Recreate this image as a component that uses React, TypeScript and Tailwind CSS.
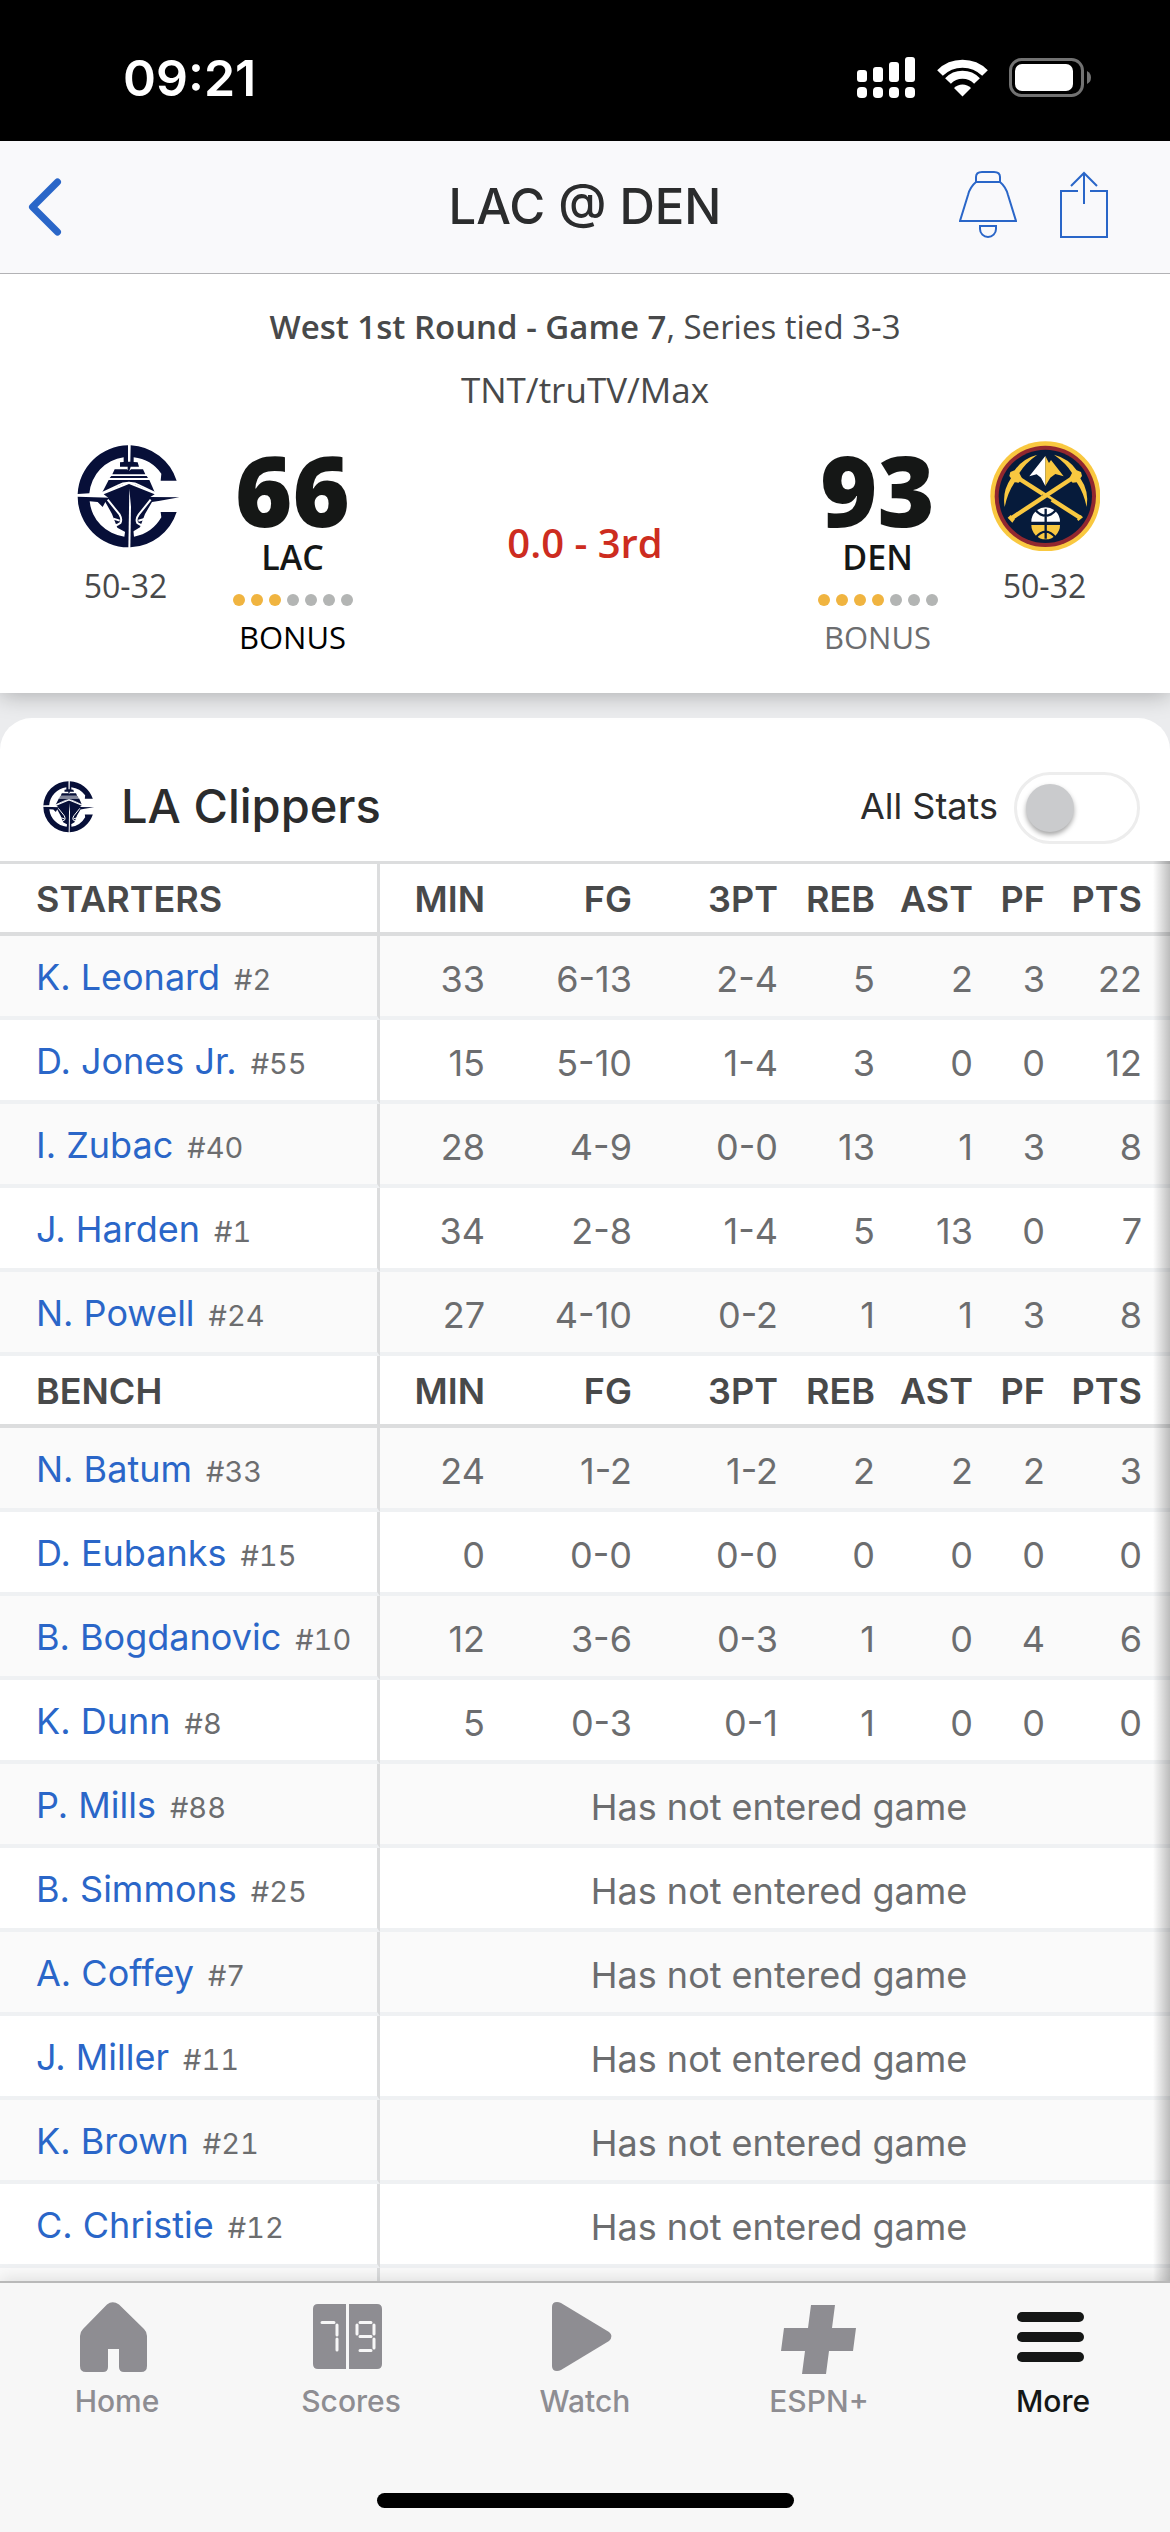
import { useState } from 'react';
import type { ReactNode } from 'react';

type StatLine = [string, string, string, string, string, string, string];

type Player = {
  name: string;
  number: number;
  stats?: StatLine;
};

type TeamScore = {
  abbr: string;
  score: number;
  record: string;
  fouls: number;
  inBonus: boolean;
  logo: ReactNode;
};

const COLUMNS = ['MIN', 'FG', '3PT', 'REB', 'AST', 'PF', 'PTS'];

const STARTERS: Player[] = [
  { name: 'K. Leonard', number: 2, stats: ['33', '6-13', '2-4', '5', '2', '3', '22'] },
  { name: 'D. Jones Jr.', number: 55, stats: ['15', '5-10', '1-4', '3', '0', '0', '12'] },
  { name: 'I. Zubac', number: 40, stats: ['28', '4-9', '0-0', '13', '1', '3', '8'] },
  { name: 'J. Harden', number: 1, stats: ['34', '2-8', '1-4', '5', '13', '0', '7'] },
  { name: 'N. Powell', number: 24, stats: ['27', '4-10', '0-2', '1', '1', '3', '8'] },
];

const BENCH: Player[] = [
  { name: 'N. Batum', number: 33, stats: ['24', '1-2', '1-2', '2', '2', '2', '3'] },
  { name: 'D. Eubanks', number: 15, stats: ['0', '0-0', '0-0', '0', '0', '0', '0'] },
  { name: 'B. Bogdanovic', number: 10, stats: ['12', '3-6', '0-3', '1', '0', '4', '6'] },
  { name: 'K. Dunn', number: 8, stats: ['5', '0-3', '0-1', '1', '0', '0', '0'] },
  { name: 'P. Mills', number: 88 },
  { name: 'B. Simmons', number: 25 },
  { name: 'A. Coffey', number: 7 },
  { name: 'J. Miller', number: 11 },
  { name: 'K. Brown', number: 21 },
  { name: 'C. Christie', number: 12 },
];

function ClippersLogo({ className }: { className: string }) {
  return (
    <svg viewBox="33 33 330 330" className={className} aria-hidden="true">
      <g fill="#070f38">
        <path d="M204 46A153 153 0 0 0 53 192L88 190A119 119 0 0 1 191 82L191 96L180 97V110H203V124L207 126L212 110H237L233 97L221 96V82A119 119 0 0 1 304 131L302 152H350A153 153 0 0 0 212 46L211 95H204Z" />
        <path d="M53 200L150 203L136 216L128 231L113 216L89 214A119 119 0 0 0 193 320L196 300L207 308L220 300L222 320A119 119 0 0 0 304 262L302 246H350A153 153 0 0 1 211 352H205A153 153 0 0 1 53 200Z" />
        <path d="M164 118H201L207 124L213 118H249L256 133H157ZM154 138H260L264 144H149ZM146 150H268L276 168L284 187L207 155L127 187Z" />
        <path d="M131 193L207 162L284 193L271 201L358 202L300 212L276 216L255 252L240 292L207 312L172 293L156 252L134 212L145 203Z" />
      </g>
      <g fill="none" stroke="#fff">
        <path d="M127 188L170 168Q207 148 243 168L285 188" strokeWidth="5" />
        <path d="M143 209L179 254Q187 268 181 279Q168 290 153 284M160 266L179 272M272 209L236 254Q226 268 232 279Q246 290 260 284M256 266L235 272" strokeWidth="6" />
        <path d="M53 195H128" strokeWidth="4" />
      </g>
      <path d="M208 176L213 230L211 358H205Z" fill="#fff" />
    </svg>
  );
}

function NuggetsLogo({ className }: { className: string }) {
  return (
    <svg viewBox="27 33 330 330" className={className} aria-hidden="true">
      <circle cx="193" cy="199" r="165" fill="#f9c840" />
      <circle cx="193" cy="199" r="152" fill="#92282f" />
      <circle cx="193" cy="199" r="140" fill="#061b3b" />
      <path d="M193 78L145 139L167 133L180 143L193 168Z" fill="#fff" />
      <path d="M193 78L204 99L210 90L248 139L223 132L208 143L193 168Z" fill="#f9c840" />
      <path d="M297 263L102 138" stroke="#f9c840" strokeWidth="13" />
      <path d="M292 273L306 262L299 255L288 268Z" fill="#f9c840" />
      <path d="M180 202L207 218" stroke="#061b3b" strokeWidth="19" />
      <path d="M88 267L284 138" stroke="#f9c840" strokeWidth="13" />
      <g fill="#f9c840">
        <path d="M80 263L94 278L102 267L89 255Z" />
        <path d="M169 74Q124 86 101 121L88 126L85 138L90 145Q63 184 71 231Q80 188 101 157L113 158L124 147L115 129Q132 100 169 74Z" />
        <path d="M219 74Q264 86 287 121L300 126L303 138L298 145Q325 184 317 231Q308 188 287 157L275 158L264 147L273 129Q256 100 219 74Z" />
      </g>
      <path d="M151 275A43 43 0 0 1 237 275Z" fill="#fff" />
      <path d="M151 285A43 43 0 0 0 237 285Z" fill="#f9c840" />
      <path d="M194 236V326M163 240Q194 275 225 240M163 324Q194 286 225 324" fill="none" stroke="#061b3b" strokeWidth="7" />
    </svg>
  );
}

function StatusBar() {
  return (
    <div className="flex h-[141px] shrink-0 items-center justify-between bg-black pt-[14px] pr-[78px] pl-[123px] text-white">
      <span className="text-[50px] leading-[60px] font-semibold">09:21</span>
      <div className="flex items-center gap-[21px]">
        <svg viewBox="0 0 60 42" className="h-[42px] w-[60px]" fill="#fff" aria-hidden="true">
          <rect x="1" y="13" width="10" height="12" rx="3" />
          <rect x="17" y="10" width="10" height="15" rx="3" />
          <rect x="33" y="5" width="10" height="20" rx="3" />
          <rect x="49" y="0" width="10" height="25" rx="3" />
          <rect x="1" y="30" width="10" height="11" rx="4" />
          <rect x="17" y="30" width="10" height="11" rx="4" />
          <rect x="33" y="30" width="10" height="11" rx="4" />
          <rect x="49" y="30" width="10" height="11" rx="4" />
        </svg>
        <svg viewBox="0 0 51 38" className="h-[38px] w-[51px]" aria-hidden="true">
          <path d="M3 14A32 32 0 0 1 48 14" fill="none" stroke="#fff" strokeWidth="8" />
          <path d="M11 22A20 20 0 0 1 40 22" fill="none" stroke="#fff" strokeWidth="8" />
          <path d="M17 29A12 12 0 0 1 34 29L25.500 37.500Z" fill="#fff" />
        </svg>
        <svg viewBox="0 0 83 39" className="h-[39px] w-[83px]" aria-hidden="true">
          <rect x="1.500" y="1.500" width="72" height="36" rx="11" fill="none" stroke="#727272" strokeWidth="3" />
          <rect x="6" y="6" width="58" height="27" rx="7" fill="#fff" />
          <path d="M78 13Q82 15 82 19.500Q82 24 78 26Z" fill="#727272" />
        </svg>
      </div>
    </div>
  );
}

function TopBar() {
  return (
    <header className="relative z-10 grid h-[133px] shrink-0 grid-cols-[1fr_auto_1fr] items-center border-b border-[#b2b2b5] bg-[#f9f9fb]">
      <button type="button" aria-label="Back" className="w-[90px] pl-7">
        <svg viewBox="0 0 34 58" className="h-[58px] w-[34px]" fill="none" stroke="#2a66c8" strokeWidth="7" strokeLinecap="round" strokeLinejoin="round">
          <path d="M29.500 4L4.500 29L29.500 54" />
        </svg>
      </button>
      <h1 className="text-[49px] leading-[60px] font-medium text-[#2b2c2d]">LAC @ DEN</h1>
      <div className="flex justify-end gap-[43px] pr-[62px] pb-1">
        <button type="button" aria-label="Alerts">
          <svg viewBox="0 0 58 68" className="h-[68px] w-[58px]" fill="none" stroke="#2a66c8" strokeWidth="2">
            <path d="M17 11V6Q17 1 23 1H35Q41 1 41 6V11" />
            <path d="M17 11H41Q47 16 49 24L57 50H1L9 24Q11 16 17 11Z" />
            <path d="M21 55H37V58A8 8 0 0 1 21 58Z" />
          </svg>
        </button>
        <button type="button" aria-label="Share">
          <svg viewBox="0 0 48 68" className="h-[68px] w-[48px]" fill="none" stroke="#2a66c8" strokeWidth="2">
            <path d="M18 20H1V66H47V20H30" />
            <path d="M24 33V2M11 15L24 2L37 15" />
          </svg>
        </button>
      </div>
    </header>
  );
}

function TeamMark({ team }: { team: TeamScore }) {
  return (
    <div className="flex w-[167px] flex-col items-center pt-5">
      {team.logo}
      <span className="mt-[11px] text-[32px] leading-[48px] text-[#48494a]">{team.record}</span>
    </div>
  );
}

function TeamPoints({ team }: { team: TeamScore }) {
  return (
    <div className="flex w-[167px] flex-col items-center pt-5 text-[#151716]">
      <span className="text-[98px] leading-[96px] font-extrabold">{team.score}</span>
      <span className="text-[34px] leading-[40px] font-semibold">{team.abbr}</span>
      <div className="mt-[17px] flex gap-[6px]">
        {Array.from({ length: 7 }, (_, i) => (
          <span key={i} className={i < team.fouls ? 'size-3 rounded-full bg-[#f0b440]' : 'size-3 rounded-full bg-[#b3b5b4]'} />
        ))}
      </div>
      <span className={team.inBonus ? 'mt-[11px] text-[31px] leading-[40px] text-black' : 'mt-[11px] text-[31px] leading-[40px] text-[#6c6d6f]'}>
        BONUS
      </span>
    </div>
  );
}

function Scoreboard() {
  const away: TeamScore = {
    abbr: 'LAC',
    score: 66,
    record: '50-32',
    fouls: 3,
    inBonus: true,
    logo: <ClippersLogo className="size-[110px]" />,
  };
  const home: TeamScore = {
    abbr: 'DEN',
    score: 93,
    record: '50-32',
    fouls: 4,
    inBonus: false,
    logo: <NuggetsLogo className="size-[110px]" />,
  };

  return (
    <section className="relative shrink-0 bg-white pt-[21px] pb-9 font-['Open_Sans',sans-serif] shadow-[0_2px_22px_rgba(0,0,0,0.28)]">
      <div className="text-center text-[#48494a]">
        <p className="text-[33px] leading-[63px]">
          <span className="font-semibold">West 1st Round - Game 7</span>, Series tied 3-3
        </p>
        <p className="text-[35px] leading-[63px]">TNT/truTV/Max</p>
      </div>
      <div className="flex items-start px-[42px]">
        <TeamMark team={away} />
        <TeamPoints team={away} />
        <p className="flex-1 pt-[97px] text-center text-[40px] leading-[50px] font-semibold text-[#cd2c20]">0.0 - 3rd</p>
        <TeamPoints team={home} />
        <TeamMark team={home} />
      </div>
    </section>
  );
}

function HeadRow({ title }: { title: string }) {
  return (
    <tr className="h-[72px] text-[36px] leading-[42px] text-[#48494a]">
      <th scope="col" className="border-r-3 border-b-4 border-[#dcddde] pt-[2px] pl-9 text-left font-semibold">
        {title}
      </th>
      {COLUMNS.map((column) => (
        <th key={column} scope="col" className="border-b-4 border-[#dcddde] pt-[2px] pr-3 text-right font-semibold last:pr-7">
          {column}
        </th>
      ))}
    </tr>
  );
}

function PlayerRow({ player }: { player: Player }) {
  return (
    <tr className="h-[84px] text-[36px] leading-[42px] text-[#6c6d6f] even:bg-[#fafafa]">
      <td className="border-r-3 border-b-4 border-r-[#dcddde] border-b-[#eff1f3] pt-[5px] pl-9 whitespace-nowrap">
        <a href="#player" className="text-[#2a66c8]">{player.name}</a>
        <span className="ml-[14px] text-[29px] tabular-nums">#{player.number}</span>
      </td>
      {player.stats ? (
        player.stats.map((value, i) => (
          <td key={COLUMNS[i]} className="border-b-4 border-[#eff1f3] pt-[5px] pr-3 text-right last:pr-7">
            {value}
          </td>
        ))
      ) : (
        <td colSpan={7} className="border-b-4 border-[#eff1f3] pt-[5px] pl-2 text-center">
          Has not entered game
        </td>
      )}
    </tr>
  );
}

function BoxScore() {
  const [allStats, setAllStats] = useState(false);

  return (
    <section className="rounded-t-[32px] bg-white">
      <div className="flex items-center justify-between pt-[54px] pr-[30px] pb-[17px] pl-10">
        <div className="flex items-center gap-[26px] pb-1">
          <ClippersLogo className="size-[55px]" />
          <h2 className="text-[47px] leading-[56px] font-medium text-[#2b2c2d]">LA Clippers</h2>
        </div>
        <label className="flex items-center gap-4 text-[36px] leading-[42px] text-[#2b2c2d]">
          <span className="pb-1">All Stats</span>
          <input
            type="checkbox"
            role="switch"
            checked={allStats}
            onChange={(event) => setAllStats(event.target.checked)}
            className="flex h-[72px] w-[126px] appearance-none items-center rounded-full border-3 border-[#ededed] px-[9px] before:size-12 before:rounded-full before:bg-[#cacbcd] before:shadow-[0_3px_5px_rgba(0,0,0,0.35)] checked:justify-end"
          />
        </label>
      </div>

      <div className="relative">
        <table className="w-full table-fixed border-separate border-spacing-0 border-t-3 border-[#dcddde]">
          <colgroup>
            <col />
            <col className="w-[117px]" />
            <col className="w-[147px]" />
            <col className="w-[146px]" />
            <col className="w-[97px]" />
            <col className="w-[98px]" />
            <col className="w-[72px]" />
            <col className="w-[113px]" />
          </colgroup>
          <tbody>
            <HeadRow title="STARTERS" />
            {STARTERS.map((player) => (
              <PlayerRow key={player.name} player={player} />
            ))}
          </tbody>
          <tbody>
            <HeadRow title="BENCH" />
            {BENCH.map((player) => (
              <PlayerRow key={player.name} player={player} />
            ))}
            <tr className="h-[84px] bg-[#fafafa]">
              <td className="border-r-3 border-[#dcddde]" />
              <td colSpan={7} />
            </tr>
          </tbody>
        </table>
        <div className="pointer-events-none absolute inset-y-0 right-0 w-[17px] bg-linear-to-r from-transparent to-black/25" />
      </div>
    </section>
  );
}

const TABS = [
  {
    label: 'Home',
    icon: (
      <path d="M29 3.500Q34.500 -1 41 3.500L66 28Q69 31 69 35V65Q69 71 63 71H46Q41 71 41 66V48H30V66Q30 71 25 71H8Q2 71 2 65V35Q2 31 5 28Z" />
    ),
  },
  {
    label: 'Scores',
    icon: (
      <>
        <path d="M6 3H34V68H6Q1 68 1 63V8Q1 3 6 3ZM37 3H65Q70 3 70 8V63Q70 68 65 68H37Z" />
        <path
          d="M10 21.500H22M25 24V34M25 38V49M48 21.500H59M45 24V33M62 24V33M48 35.500H59M62 38V47M48 49.500H59"
          fill="none"
          stroke="#f7f7f7"
          strokeWidth="3"
          strokeLinecap="round"
        />
      </>
    ),
  },
  {
    label: 'Watch',
    icon: <path d="M6 6Q6 1 11 1Q13 1 15 2L63 31Q68 35 63 40L15 69Q13 70 11 70Q6 70 6 65Z" />,
  },
  {
    label: 'ESPN+',
    icon: <path d="M31 4H55L52 27H76L73 50H49L46 73H22L25 50H1L4 27H28Z" />,
  },
  {
    label: 'More',
    icon: (
      <>
        <rect x="3" y="11" width="67" height="10" rx="5" />
        <rect x="3" y="31" width="67" height="10" rx="5" />
        <rect x="3" y="51" width="67" height="10" rx="5" />
      </>
    ),
  },
];

function TabBar() {
  return (
    <footer className="relative shrink-0 border-t-2 border-[#b9b9b9] bg-[#f7f7f7] pb-6 shadow-[0_-2px_16px_rgba(0,0,0,0.12)]">
      <nav className="grid grid-cols-5 pt-[18px] pb-[72px]">
        {TABS.map((tab) => (
          <a
            key={tab.label}
            href={`#${tab.label.toLowerCase()}`}
            className={
              tab.label === 'More'
                ? 'flex flex-col items-center gap-1 text-[30px] leading-[40px] font-medium text-[#151716]'
                : 'flex flex-col items-center gap-1 text-[30px] leading-[40px] font-medium text-[#8e8d92]'
            }
          >
            <svg viewBox="0 0 78 76" className="h-[76px] w-[78px]" fill="currentColor" aria-hidden="true">
              {tab.icon}
            </svg>
            {tab.label}
          </a>
        ))}
      </nav>
      <div className="mx-auto h-[15px] w-[417px] rounded-full bg-black" />
    </footer>
  );
}

export default function App() {
  return (
    <div className="flex h-screen flex-col overflow-hidden bg-[#ebecee] font-['Inter',sans-serif]">
      <StatusBar />
      <TopBar />
      <Scoreboard />
      <main className="min-h-0 flex-1 overflow-hidden pt-[25px]">
        <BoxScore />
      </main>
      <TabBar />
    </div>
  );
}
